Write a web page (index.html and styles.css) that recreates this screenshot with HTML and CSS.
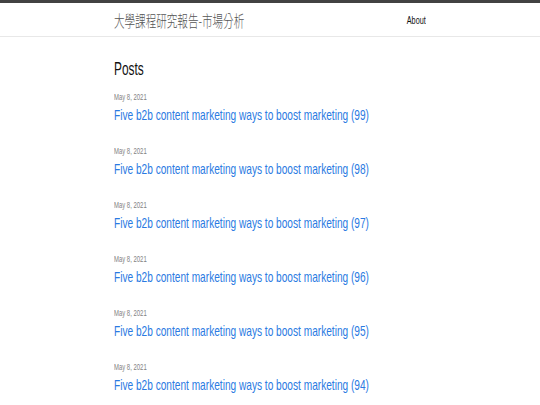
FILE: index.html
```html
<!DOCTYPE html>
<html lang="zh-Hant">
<head>
  <meta charset="UTF-8">
  <meta name="viewport" content="width=device-width, initial-scale=1.0">
  <title>大學課程研究報告-市場分析</title>
  <link rel="stylesheet" href="styles.css">
</head>
<body>

  <!-- Site Header -->
  <header class="site-header">
    <div class="wrapper header-row">
      <a class="site-title squeeze" href="#">大學課程研究報告-市場分析</a>
      <nav class="site-nav">
        <a class="page-link squeeze squeeze-right" href="#">About</a>
      </nav>
    </div>
  </header>

  <!-- Post List -->
  <main class="wrapper page-content">
    <h2 class="post-list-heading"><span class="squeeze">Posts</span></h2>
    <ul class="post-list">
      <li>
        <span class="post-meta"><span class="squeeze">May 8, 2021</span></span>
        <h3><a class="post-link squeeze" href="#">Five b2b content marketing ways to boost marketing (99)</a></h3>
      </li>
      <li>
        <span class="post-meta"><span class="squeeze">May 8, 2021</span></span>
        <h3><a class="post-link squeeze" href="#">Five b2b content marketing ways to boost marketing (98)</a></h3>
      </li>
      <li>
        <span class="post-meta"><span class="squeeze">May 8, 2021</span></span>
        <h3><a class="post-link squeeze" href="#">Five b2b content marketing ways to boost marketing (97)</a></h3>
      </li>
      <li>
        <span class="post-meta"><span class="squeeze">May 8, 2021</span></span>
        <h3><a class="post-link squeeze" href="#">Five b2b content marketing ways to boost marketing (96)</a></h3>
      </li>
      <li>
        <span class="post-meta"><span class="squeeze">May 8, 2021</span></span>
        <h3><a class="post-link squeeze" href="#">Five b2b content marketing ways to boost marketing (95)</a></h3>
      </li>
      <li>
        <span class="post-meta"><span class="squeeze">May 8, 2021</span></span>
        <h3><a class="post-link squeeze" href="#">Five b2b content marketing ways to boost marketing (94)</a></h3>
      </li>
    </ul>
  </main>

</body>
</html>
```

FILE: styles.css
```css
/* Base */
html, body {
  margin: 0;
  padding: 0;
  overflow: hidden;
  background: #fff;
}

body {
  font-family: "Liberation Sans", Arial, "Noto Sans CJK TC", sans-serif;
  color: #111;
}

/* Text in the screenshot is horizontally condensed */
.squeeze {
  display: inline-block;
  white-space: nowrap;
  transform: scaleX(0.66);
  transform-origin: left center;
}

.squeeze-right {
  transform-origin: right center;
}

.wrapper {
  width: 312px;
  margin: 0 auto;
}

a {
  text-decoration: none;
}

/* Header */
.site-header {
  border-top: 3px solid #424242;
  border-bottom: 1px solid #e8e8e8;
  height: 33px;
}

.header-row {
  height: 33px;
  display: flex;
  justify-content: space-between;
  align-items: center;
}

.site-title {
  font-family: "Noto Sans CJK TC", "Liberation Sans", sans-serif;
  font-size: 16px;
  font-weight: 300;
  color: #555;
  margin-right: -80px;
}

.site-nav {
  display: flex;
  justify-content: flex-end;
}

.page-link {
  font-size: 11px;
  color: #111;
}

/* Posts */
.page-content {
  padding-top: 21px;
}

.post-list-heading {
  margin: 0 0 11px;
  font-size: 18px;
  line-height: 22px;
  font-weight: normal;
  color: #111;
}

.post-list {
  list-style: none;
  margin: 0;
  padding: 0;
}

.post-list li {
  margin-bottom: 20px;
}

.post-meta {
  display: block;
  font-size: 9px;
  line-height: 12px;
  color: #828282;
  margin-bottom: 2px;
}

.post-list h3 {
  margin: 0;
  font-size: 15.35px;
  line-height: 20px;
  font-weight: normal;
}

.post-link {
  color: #2a7ae2;
}
```
